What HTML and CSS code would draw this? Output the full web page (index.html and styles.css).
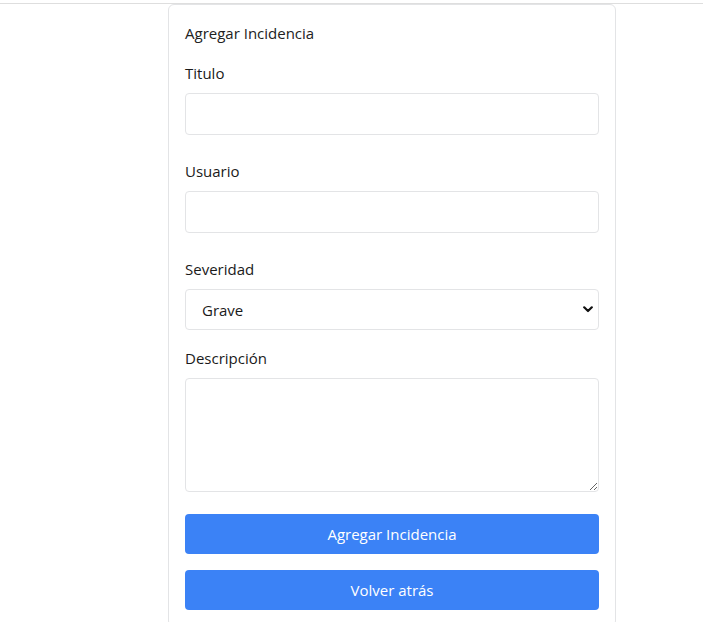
FILE: index.html
```html
<!DOCTYPE html>
<html lang="es">
<head>
<meta charset="utf-8">
<title>Agregar Incidencia</title>
<link rel="stylesheet" href="styles.css">
</head>
<body>
<header class="topbar"></header>
<main class="page">
  <form class="card">
    <h1 class="card-title">Agregar Incidencia</h1>
    <div class="field">
      <label class="label" for="titulo">Titulo</label>
      <input class="control" id="titulo" type="text">
    </div>
    <div class="field">
      <label class="label" for="usuario">Usuario</label>
      <input class="control" id="usuario" type="text">
    </div>
    <div class="field field-select">
      <label class="label" for="severidad">Severidad</label>
      <div class="select-wrap">
        <select class="control select" id="severidad">
          <option>Grave</option>
          <option>Media</option>
          <option>Leve</option>
        </select>
        <svg class="chevron" width="10" height="7" viewBox="0 0 10 7" aria-hidden="true"><path d="M1.2 1.3 L5 5 L8.8 1.3" fill="none" stroke="#111" stroke-width="2.2" stroke-linecap="round" stroke-linejoin="round"/></svg>
      </div>
    </div>
    <div class="field field-area">
      <label class="label" for="descripcion">Descripción</label>
      <textarea class="control area" id="descripcion"></textarea>
    </div>
    <div class="actions">
      <button class="btn" type="button">Agregar Incidencia</button>
      <button class="btn" type="button">Volver atrás</button>
    </div>
  </form>
</main>
</body>
</html>
```
FILE: styles.css
```css
* { box-sizing: border-box; }
html, body { margin: 0; padding: 0; background: #fff; }
body {
  font-family: "Open Sans", "Noto Sans", sans-serif;
  font-size: 15px;
  line-height: 24px;
  color: #1f2328;
}
.topbar {
  height: 4px;
  border-bottom: 1px solid #dedede;
}
.page {
  display: flex;
  padding-left: 168px;
}
.card {
  width: 448px;
  border: 1px solid #e3e4e6;
  border-radius: 6px;
  padding: 16px 16px 16px;
  margin: 0;
  display: flex;
  flex-direction: column;
}
.card-title {
  margin: 0 0 16px;
  font-size: 15px;
  font-weight: 400;
  line-height: 24px;
  color: #222;
}
.field {
  display: flex;
  flex-direction: column;
  gap: 8px;
  margin-bottom: 24px;
}
.field-select { margin-bottom: 16px; }
.field-area { margin-bottom: 22px; }
.label {
  font-size: 15px;
  line-height: 24px;
  color: #1a1a1a;
}
.control {
  width: 100%;
  height: 42px;
  border: 1px solid #e3e4e6;
  border-radius: 4px;
  background: #fff;
  font: inherit;
  color: #1a1a1a;
  padding: 8px 16px;
  outline: none;
}
.select-wrap { position: relative; }
.select {
  appearance: none;
  -webkit-appearance: none;
  height: 41px;
}
.chevron {
  position: absolute;
  right: 6px;
  top: 17px;
  pointer-events: none;
}
.area {
  height: 114px;
  resize: vertical;
}
.actions {
  display: flex;
  flex-direction: column;
  gap: 16px;
}
.btn {
  height: 40px;
  border: 0;
  border-radius: 4px;
  background: #3b82f6;
  color: #fff;
  font: inherit;
  font-size: 15px;
}
```
